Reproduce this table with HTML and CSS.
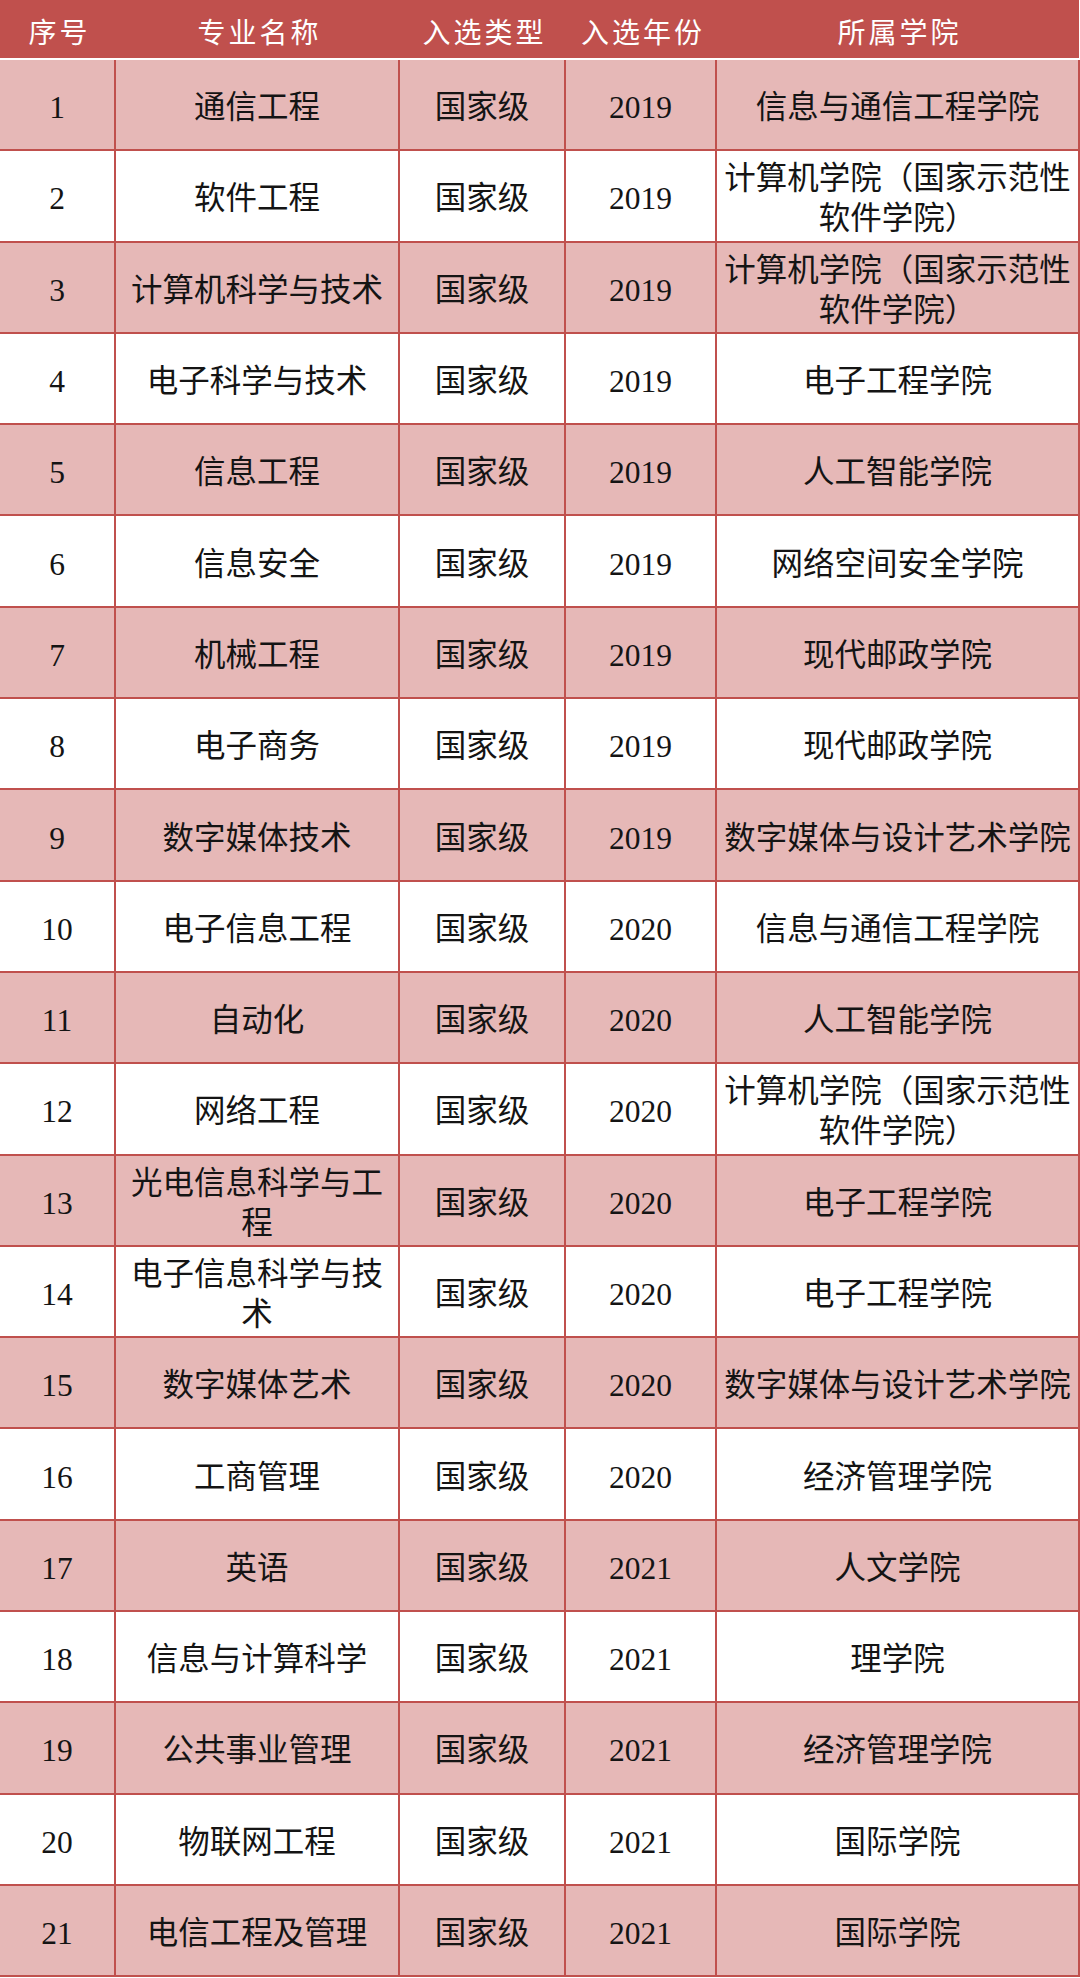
FILE: index.html
```html
<!DOCTYPE html>
<html lang="zh-CN">
<head>
<meta charset="utf-8">
<title>专业列表</title>
<link rel="stylesheet" href="styles.css">
</head>
<body>
<div class="sheet">
  <div class="head">
    <div class="hcell">序号</div>
    <div class="hcell">专业名称</div>
    <div class="hcell">入选类型</div>
    <div class="hcell">入选年份</div>
    <div class="hcell">所属学院</div>
  </div>
  <div class="body">
    <div class="row odd"><div class="cell">1</div><div class="cell">通信工程</div><div class="cell">国家级</div><div class="cell">2019</div><div class="cell">信息与通信工程学院</div></div>
    <div class="row"><div class="cell">2</div><div class="cell">软件工程</div><div class="cell">国家级</div><div class="cell">2019</div><div class="cell">计算机学院（国家示范性软件学院）</div></div>
    <div class="row odd"><div class="cell">3</div><div class="cell">计算机科学与技术</div><div class="cell">国家级</div><div class="cell">2019</div><div class="cell">计算机学院（国家示范性软件学院）</div></div>
    <div class="row"><div class="cell">4</div><div class="cell">电子科学与技术</div><div class="cell">国家级</div><div class="cell">2019</div><div class="cell">电子工程学院</div></div>
    <div class="row odd"><div class="cell">5</div><div class="cell">信息工程</div><div class="cell">国家级</div><div class="cell">2019</div><div class="cell">人工智能学院</div></div>
    <div class="row"><div class="cell">6</div><div class="cell">信息安全</div><div class="cell">国家级</div><div class="cell">2019</div><div class="cell">网络空间安全学院</div></div>
    <div class="row odd"><div class="cell">7</div><div class="cell">机械工程</div><div class="cell">国家级</div><div class="cell">2019</div><div class="cell">现代邮政学院</div></div>
    <div class="row"><div class="cell">8</div><div class="cell">电子商务</div><div class="cell">国家级</div><div class="cell">2019</div><div class="cell">现代邮政学院</div></div>
    <div class="row odd"><div class="cell">9</div><div class="cell">数字媒体技术</div><div class="cell">国家级</div><div class="cell">2019</div><div class="cell">数字媒体与设计艺术学院</div></div>
    <div class="row"><div class="cell">10</div><div class="cell">电子信息工程</div><div class="cell">国家级</div><div class="cell">2020</div><div class="cell">信息与通信工程学院</div></div>
    <div class="row odd"><div class="cell">11</div><div class="cell">自动化</div><div class="cell">国家级</div><div class="cell">2020</div><div class="cell">人工智能学院</div></div>
    <div class="row"><div class="cell">12</div><div class="cell">网络工程</div><div class="cell">国家级</div><div class="cell">2020</div><div class="cell">计算机学院（国家示范性软件学院）</div></div>
    <div class="row odd"><div class="cell">13</div><div class="cell">光电信息科学与工程</div><div class="cell">国家级</div><div class="cell">2020</div><div class="cell">电子工程学院</div></div>
    <div class="row"><div class="cell">14</div><div class="cell">电子信息科学与技术</div><div class="cell">国家级</div><div class="cell">2020</div><div class="cell">电子工程学院</div></div>
    <div class="row odd"><div class="cell">15</div><div class="cell">数字媒体艺术</div><div class="cell">国家级</div><div class="cell">2020</div><div class="cell">数字媒体与设计艺术学院</div></div>
    <div class="row"><div class="cell">16</div><div class="cell">工商管理</div><div class="cell">国家级</div><div class="cell">2020</div><div class="cell">经济管理学院</div></div>
    <div class="row odd"><div class="cell">17</div><div class="cell">英语</div><div class="cell">国家级</div><div class="cell">2021</div><div class="cell">人文学院</div></div>
    <div class="row"><div class="cell">18</div><div class="cell">信息与计算科学</div><div class="cell">国家级</div><div class="cell">2021</div><div class="cell">理学院</div></div>
    <div class="row odd"><div class="cell">19</div><div class="cell">公共事业管理</div><div class="cell">国家级</div><div class="cell">2021</div><div class="cell">经济管理学院</div></div>
    <div class="row"><div class="cell">20</div><div class="cell">物联网工程</div><div class="cell">国家级</div><div class="cell">2021</div><div class="cell">国际学院</div></div>
    <div class="row odd"><div class="cell">21</div><div class="cell">电信工程及管理</div><div class="cell">国家级</div><div class="cell">2021</div><div class="cell">国际学院</div></div>
  </div>
</div>
</body>
</html>
```

FILE: styles.css
```css
html, body {
  margin: 0;
  padding: 0;
  background: #ffffff;
}

.sheet {
  width: 1079px;
  font-family: "Liberation Serif", "Noto Sans CJK SC", serif;
  font-weight: 400;
  color: #141414;
}

.head {
  display: grid;
  grid-template-columns: 116px 284px 166px 151px 362px;
  height: 58px;
  background: #c0504d;
  margin-bottom: 2px;
}

.hcell {
  display: flex;
  align-items: center;
  justify-content: center;
  color: #ffffff;
  font-family: "Noto Sans CJK SC", sans-serif;
  font-size: 28px;
  font-weight: 400;
  letter-spacing: 3px;
  padding-left: 3px;
  padding-top: 4px;
  box-sizing: border-box;
}

.body {
  display: flex;
  flex-direction: column;
}

.row {
  display: grid;
  grid-template-columns: 116px 284px 166px 151px 363px;
  height: 91.3px;
  background: #ffffff;
}

.row.odd {
  background: #e6b8b7;
}

.cell {
  display: flex;
  align-items: center;
  justify-content: center;
  text-align: center;
  box-sizing: border-box;
  border-right: 2px solid #c0504d;
  border-bottom: 2px solid #c0504d;
  font-size: 31.5px;
  line-height: 40px;
  padding-top: 7px;
}
```
